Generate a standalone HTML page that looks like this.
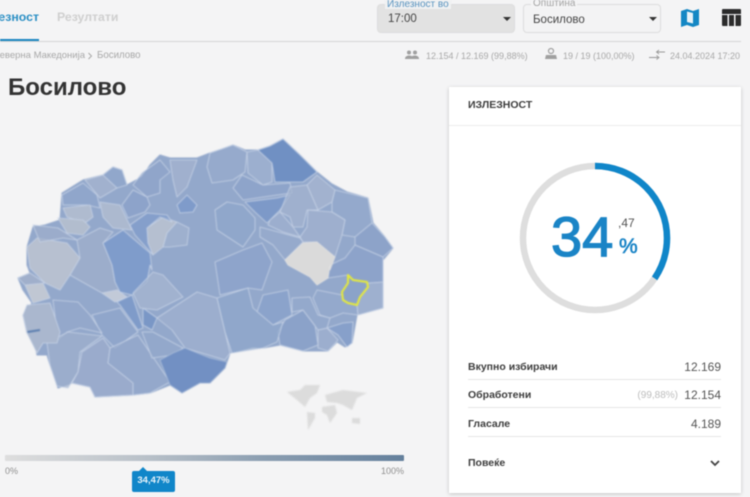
<!DOCTYPE html>
<html><head><meta charset="utf-8"><style>
html,body{margin:0;padding:0;width:750px;height:497px;overflow:hidden;background:#f4f4f5;font-family:"Liberation Sans",sans-serif}
#p{position:relative;width:750px;height:497px;overflow:hidden;filter:blur(.4px)}
.a{position:absolute;white-space:nowrap}
.sel{position:absolute;top:4px;height:29px;width:138px;box-sizing:border-box;border:1px solid #ddd;border-radius:4px}
.tri{position:absolute;width:0;height:0;border-left:4px solid transparent;border-right:4px solid transparent;border-top:4px solid #333}
.st{font-size:9px;color:#a8a8a8;top:50px;line-height:12px}
.lb{left:468px;font-size:10.5px;font-weight:bold;color:#3d3d3d;line-height:14px}
.v{right:29px;font-size:12px;color:#555;line-height:14px}
.hr{position:absolute;left:468px;width:253px;height:1px;background:#e6e6e6}
</style></head><body><div id="p">

<div class="a" style="right:711px;top:10px;font-size:12.3px;font-weight:bold;color:#2b8fc4;line-height:14px">Излезност</div>
<div class="a" style="left:57px;top:10px;font-size:12.3px;font-weight:bold;color:#cfcfcf;line-height:14px">Резултати</div>
<div class="a" style="left:0;top:41px;width:741px;height:1px;background:#d6d6d6"></div>
<div class="a" style="left:0;top:39px;width:39px;height:2px;background:#1a86c0"></div>

<div class="sel" style="left:377px;background:#e2e2e2"></div>
<div class="a" style="left:385px;top:0;background:#f0f1f2;padding:0 2px;font-size:10px;color:#5a94c0;line-height:9px">Излезност во</div>
<div class="a" style="left:388px;top:13px;font-size:11.500px;color:#444;line-height:13px">17:00</div>
<div class="tri" style="left:503px;top:17px"></div>
<div class="sel" style="left:523px;background:#f3f3f4"></div>
<div class="a" style="left:531px;top:-1px;background:#f4f4f5;padding:0 2px;font-size:10px;color:#a5a5a5;line-height:9px">Општина</div>
<div class="a" style="left:533px;top:14px;font-size:11.500px;color:#444;line-height:13px">Босилово</div>
<div class="tri" style="left:649px;top:17px"></div>

<svg class="a" style="left:678px;top:6px" width="24" height="22" viewBox="0 0 24 22"><path d="M3 5l6-2 6 2 6-2v16l-6 2-6-2-6 2z" fill="#1487c4"/><path d="M9 5.500l6 1.500v10.500l-6-1.500z" fill="#e8f2f8"/></svg>
<svg class="a" style="left:721px;top:8px" width="22" height="20" viewBox="0 0 22 20"><path d="M1 2a1 1 0 0 1 1-1h17a1 1 0 0 1 1 1v4H1z" fill="#2b2b2b"/><path d="M1 7h5.500v11H2a1 1 0 0 1-1-1zM8 7h5v11H8zM14.500 7H20v10a1 1 0 0 1-1 1h-4.500z" fill="#2b2b2b"/></svg>

<div class="a" style="right:665px;top:50px;font-size:9.500px;color:#a8a8a8;line-height:12px">Северна Македонија</div>
<svg class="a" style="left:87px;top:52px" width="6" height="8" viewBox="0 0 6 8"><path d="M1.500 1l3 3-3 3" fill="none" stroke="#a8a8a8" stroke-width="1"/></svg>
<div class="a" style="left:97px;top:50px;font-size:9.700px;color:#a8a8a8;line-height:12px">Босилово</div>

<svg class="a" style="left:404px;top:49px" width="16" height="12" viewBox="0 0 16 12"><circle cx="5" cy="3.500" r="2" fill="#a0a0a0"/><circle cx="11" cy="3.500" r="2" fill="#a0a0a0"/><path d="M1 10c0-2.500 2-3.500 4-3.500s3 .5 3 1c0-.5 1-1 3-1s4 1 4 3.500z" fill="#a0a0a0"/></svg>
<div class="a st" style="left:426px">12.154 / 12.169 (99,88%)</div>
<svg class="a" style="left:544px;top:47px" width="14" height="13" viewBox="0 0 14 13"><circle cx="7" cy="4" r="2.500" fill="none" stroke="#a0a0a0" stroke-width="1.200"/><path d="M2 8h10l1 4H1z" fill="#a0a0a0"/></svg>
<div class="a st" style="left:563px">19 / 19 (100,00%)</div>
<svg class="a" style="left:649px;top:49px" width="17" height="12" viewBox="0 0 17 12"><path d="M0 8.500h9M7.500 6.500L10 8.500l-2.500 2" fill="none" stroke="#999" stroke-width=".9"/><path d="M16 3H8M10 1L7.500 3 10 5" fill="none" stroke="#999" stroke-width=".9"/></svg>
<div class="a st" style="left:670px">24.04.2024 17:20</div>

<div class="a" style="left:8px;top:73px;font-size:24px;font-weight:bold;color:#333;line-height:30px">Босилово</div>

<svg class="a" style="left:0;top:130px;filter:blur(.6px)" width="420" height="280" viewBox="0 130 420 280">
<polygon fill="#93a8cb" stroke="#93a8cb" stroke-width="1" stroke-linejoin="round" points="27,247 33,227 45,225 60,220 62,193 83,180 103,175 113,167 122,170 127,185 142,177 150,165 160,155 170,158 197,158 210,153 222,149 233,145 245,150 258,150 270,146 283,139 300,155 317,172 332,184 347,192 368,198 373,223 385,237 393,248 383,260 383,282 383,308 357,315 352,343 345,347 337,342 328,351 303,351 280,345 263,348 253,347 230,353 225,368 210,383 200,383 182,393 170,385 150,393 133,395 95,397 90,387 72,383 58,388 50,365 47,355 37,355 35,345 27,333 23,315 32,303 23,290 18,278 30,273 27,265"/>
<g stroke="#c6d2e6" stroke-width=".8" stroke-linejoin="round" fill-opacity=".7">
<polygon fill="#b7c0d0" fill-opacity="1" points="27,247 37,238 67,243 80,258 70,275 60,290 45,283 30,268"/>
<polygon fill="#8fa5ca" points="62,195 83,183 97,195 100,208 87,205 63,205"/>
<polygon fill="#a7b5cf" points="85,180 103,175 117,188 100,198"/>
<polygon fill="#90a6ca" points="103,175 113,167 122,170 127,185 117,188"/>
<polygon fill="#b0bccf" fill-opacity=".95" points="63,208 90,205 93,217 85,223 67,217"/>
<polygon fill="#b3bece" fill-opacity=".95" points="58,218 83,220 90,227 83,235 67,233"/>
<polygon fill="#9eaecb" points="33,225 58,228 77,240 63,238 40,242"/>
<polygon fill="#adb9cf" fill-opacity=".95" points="100,202 120,205 132,230 113,228 103,217"/>
<polygon fill="#9fafcb" points="77,240 100,228 113,232 103,243 112,265 115,282 120,292 102,293 70,275 80,258"/>
<polygon fill="#b5bfd0" fill-opacity="1" points="147,228 163,217 177,222 167,233 163,247 153,255 148,243"/>
<polygon fill="#8fa4c9" points="142,173 160,160 170,172 160,180 160,193 147,197 133,185"/>
<polygon fill="#a5b4cf" points="170,160 197,160 187,187 177,197 173,180"/>
<polygon fill="#7f9bca" fill-opacity="1" points="177,205 187,195 197,205 193,212 180,213"/>
<polygon fill="#7f9bca" points="130,225 147,213 167,215 172,222 160,217 147,228 148,243 153,255 135,235"/>
<polygon fill="#8aa1c9" points="133,190 147,197 150,205 145,212 128,218 122,205"/>
<polygon fill="#a3b3cf" points="167,233 177,222 189,228 187,245 170,247 163,247"/>
<polygon fill="#7f9ccb" fill-opacity="1" points="103,243 123,230 150,253 152,270 150,265 147,282 132,295 120,292 115,282 112,265"/>
<polygon fill="#97abcc" points="210,153 233,145 247,152 245,172 233,180 212,183 207,167"/>
<polygon fill="#a0b2d0" points="247,152 258,150 272,163 272,182 263,185 248,173"/>
<polygon fill="#7090c3" fill-opacity="1" points="258,150 270,146 283,139 300,155 317,172 303,182 275,182 272,163"/>
<polygon fill="#8ba2c9" points="233,188 242,175 263,185 290,183 292,193 277,195 243,200"/>
<polygon fill="#7d99c8" fill-opacity="1" points="245,202 277,198 290,195 280,210 267,223 255,212"/>
<polygon fill="#8fa6cb" points="215,210 227,202 243,205 255,218 255,230 243,247 217,230"/>
<polygon fill="#a4b4cf" points="290,187 307,185 318,210 307,210 303,227 293,227 290,217 280,212"/>
<polygon fill="#a8b7d0" points="307,185 317,175 335,190 332,202 318,210"/>
<polygon fill="#94a9cc" points="335,190 368,198 372,223 355,237 342,235 345,220 332,212 332,202"/>
<polygon fill="#a2b2cf" points="308,210 332,212 345,220 342,235 335,257 317,242 303,242 300,237 307,227"/>
<polygon fill="#8aa1c8" points="372,223 385,237 393,248 383,257 355,245 355,237"/>
<polygon fill="#a0b1cf" points="270,220 280,212 293,227 300,237 283,232 268,225"/>
<polygon fill="#97abcc" points="260,227 300,238 303,242 285,260 273,245 260,237"/>
<polygon fill="#8ba3ca" points="215,262 243,250 262,243 272,262 262,290 248,288 220,295"/>
<polygon fill="#94a9cc" points="317,290 342,295 348,303 357,305 358,315 343,313 330,318 320,315 313,298"/>
<polygon fill="#a3b3d0" points="368,283 383,282 383,308 358,315 357,305 360,297"/>
<polygon fill="#8aa1c9" points="330,265 345,258 355,245 383,257 383,282 368,283 353,280 348,275 328,278"/>
<polygon fill="#819cc9" points="327,328 343,323 353,322 352,343 347,347 338,335"/>
<polygon fill="#a0b1cf" points="318,330 327,328 338,340 328,351 318,348"/>
<polygon fill="#88a0c8" points="285,320 303,310 315,325 318,345 303,351 280,345 278,332"/>
<polygon fill="#94a9cc" points="292,298 310,297 318,315 330,318 327,328 318,330 303,310 292,312"/>
<polygon fill="#88a1ca" points="263,295 288,290 292,315 273,325 257,312"/>
<polygon fill="#8fa6cb" points="217,298 248,288 253,308 273,325 283,322 277,342 263,348 232,353 225,332"/>
<polygon fill="#9fb0ce" points="157,318 197,292 217,298 225,332 230,353 225,360 185,348 172,330"/>
<polygon fill="#8fa5ca" points="92,315 120,308 138,332 115,348 102,335"/>
<polygon fill="#94a8ca" points="53,300 78,302 90,315 102,333 80,328 67,332 58,340"/>
<polygon fill="#9eafcc" points="47,343 68,332 102,336 80,352 78,372 68,388 57,386 50,365"/>
<polygon fill="#9cadcc" points="82,352 103,338 110,348 108,363 133,383 133,395 95,397 90,387 72,383 78,372"/>
<polygon fill="#94a8ca" points="110,348 138,335 170,382 150,393 133,395 133,383 108,363"/>
<polygon fill="#7f9bc9" fill-opacity="1" points="117,302 132,295 143,328 138,330 120,305"/>
<polygon fill="#7a97c6" fill-opacity="1" points="143,308 157,318 152,330 143,325"/>
<polygon fill="#93a8cb" points="142,332 153,332 183,348 173,355 152,358"/>
<polygon fill="#a7b6d0" points="133,293 153,272 163,275 183,297 157,310 140,308"/>
<polygon fill="#c2cad8" fill-opacity="1" points="102,293 117,290 127,297 115,302"/>
<polygon fill="#c0c7d3" fill-opacity="1" points="25,285 43,283 50,298 33,303"/>
<polygon fill="#aab7ce" fill-opacity="1" points="27,305 50,303 60,332 57,343 43,343 37,353 27,333 23,315"/>
<polygon fill="#a0afcb" fill-opacity="1" points="18,278 30,273 45,283 25,285"/>
<polygon fill="#7290c3" fill-opacity="1" stroke="#a9bcd9" points="160,360 173,353 185,348 210,358 227,362 225,368 210,383 200,383 182,393 170,385"/>
<polygon fill="#dadada" fill-opacity="1" stroke="#e2e2e2" points="285,260 303,243 317,242 335,257 330,270 330,265 328,278 317,285 310,277 288,265"/>
</g>
<polygon fill="#5d7fb0" points="27,331 40,329 40,331 28,333"/>
<polygon fill="#8ba3c9" stroke="#e6ea3c" stroke-width="2" stroke-linejoin="round" points="348,275 353,280 367,282 368,287 360,297 357,305 348,303 343,300 342,292 348,283"/>
</svg>

<svg class="a" style="left:280px;top:375px;filter:blur(.9px)" width="100" height="65" viewBox="280 375 100 65"><g fill="#dcdcdc">
<polygon points="287,392 300,390 305,385 320,385 317,393 310,398 305,407 297,400"/>
<polygon points="307,412 315,413 315,418 308,430"/>
<polygon points="325,395 343,390 367,393 357,398 352,410 343,405 337,403 327,402"/>
<polygon points="322,407 335,405 337,413 330,423 327,415 322,412"/>
<polygon points="352,418 360,418 360,424 352,423"/>
</g></svg>

<div class="a" style="left:5px;top:455px;width:399px;height:6px;background:linear-gradient(90deg,#dedede,#b9c1c9 35%,#8b9eb1 65%,#64809c);border-radius:1px"></div>
<div class="a" style="left:5px;top:466px;font-size:9px;color:#8f8f8f;line-height:11px">0%</div>
<div class="a" style="right:346px;top:466px;font-size:9px;color:#8f8f8f;line-height:11px">100%</div>
<div class="a" style="left:132px;top:471px;width:43px;height:21px;background:#1086c9;border-radius:2px;color:#e8f4fb;font-size:9.500px;font-weight:bold;line-height:20px;text-align:center">34,47%</div>
<div class="a" style="left:139px;top:467px;width:0;height:0;border-left:4px solid transparent;border-right:4px solid transparent;border-bottom:4px solid #1086c9"></div>

<div class="a" style="left:449px;top:87px;width:292px;height:406px;background:#fff;box-shadow:0 1px 4px rgba(0,0,0,.2)"></div>
<div class="a" style="left:468px;top:98px;font-size:10.500px;font-weight:bold;color:#3d3d3d;line-height:14px">ИЗЛЕЗНОСТ</div>
<div class="a" style="left:449px;top:125px;width:292px;height:1px;background:#ececec"></div>

<svg class="a" style="left:515px;top:158px" width="160" height="160" viewBox="0 0 160 160">
<circle cx="80" cy="80" r="72" fill="none" stroke="#dedede" stroke-width="6.500"/>
<circle cx="80" cy="80" r="72" fill="none" stroke="#1086c9" stroke-width="6.500" stroke-dasharray="155.900 452.400" transform="rotate(-90 80 80)"/>
</svg>
<div class="a" style="left:551px;top:206px;font-size:56px;color:#1a84c6;line-height:62px;-webkit-text-stroke:1.300px #1a84c6">34</div>
<div class="a" style="left:618px;top:216px;font-size:12px;color:#555;line-height:14px">,47</div>
<div class="a" style="left:619px;top:234px;font-size:21px;color:#1a84c6;line-height:26px;-webkit-text-stroke:.6px #1a84c6">%</div>

<div class="a lb" style="top:360px">Вкупно избирачи</div>
<div class="a v" style="top:360px">12.169</div>
<div class="hr" style="top:379px"></div>
<div class="a lb" style="top:388px">Обработени</div>
<div class="a" style="right:72px;top:389px;font-size:10px;color:#bdbdbd;line-height:14px">(99,88%)</div>
<div class="a v" style="top:388px">12.154</div>
<div class="hr" style="top:407px"></div>
<div class="a lb" style="top:417px">Гласале</div>
<div class="a v" style="top:417px">4.189</div>
<div class="hr" style="top:436px"></div>
<div class="a lb" style="top:456px">Повеќе</div>
<svg class="a" style="left:709px;top:459px" width="12" height="9" viewBox="0 0 12 9"><path d="M2 2l4 4 4-4" fill="none" stroke="#444" stroke-width="1.800"/></svg>
</div></body></html>
